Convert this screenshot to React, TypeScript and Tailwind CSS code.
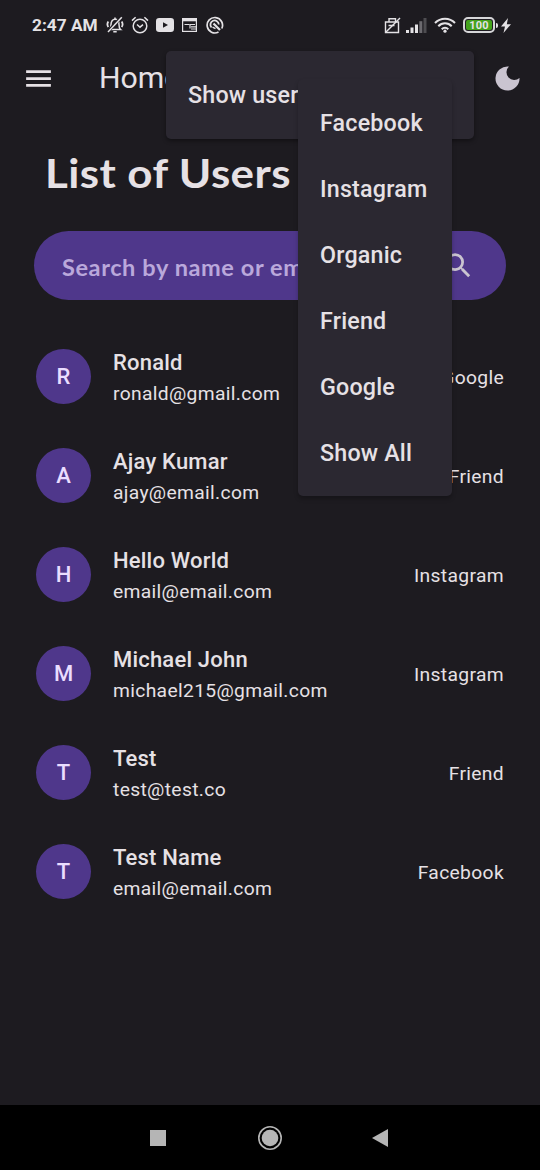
import React from "react";
import { MdMenu, MdSearch } from "react-icons/md";

const users = [
  { name: "Ronald", email: "ronald@gmail.com", source: "Google" },
  { name: "Ajay Kumar", email: "ajay@email.com", source: "Friend" },
  { name: "Hello World", email: "email@email.com", source: "Instagram" },
  { name: "Michael John", email: "michael215@gmail.com", source: "Instagram" },
  { name: "Test", email: "test@test.co", source: "Friend" },
  { name: "Test Name", email: "email@email.com", source: "Facebook" },
];

const sources = ["Facebook", "Instagram", "Organic", "Friend", "Google", "Show All"];

function StatusBar() {
  return (
    <div className="flex h-[50px] items-center pl-[32px] text-[#e4e2e5]">
      <span className="w-[74px] whitespace-nowrap text-[17.3px] font-bold leading-[22px]">2:47 AM</span>
      {/* muted bell */}
      <svg className="h-[18px] w-[18px]" viewBox="0 0 18 18" fill="none" stroke="currentColor" strokeWidth="1.5">
        <path d="M3.500 13.500c1.300-1 1.500-2 1.500-5C5 5.200 6.600 3.300 9 3.300s4 1.900 4 5.200c0 3 .2 4 1.500 5z" />
        <path d="M7.300 15.800h3.400M9 1.500v1.500" />
        <path d="M2.300 5.500c-1 1.500-1 4 0 5.500M15.700 5.500c1 1.500 1 4 0 5.500" strokeWidth="1.800" />
        <path d="M15.500 1L2 15.500" stroke="#1d1b20" strokeWidth="3.200" />
        <path d="M15.800 1.300L2 16" />
      </svg>
      {/* alarm clock */}
      <svg className="ml-[7px] h-[18px] w-[18px]" viewBox="0 0 18 18" fill="none" stroke="currentColor" strokeWidth="1.500">
        <circle cx="9" cy="10" r="6.800" />
        <path d="M1 4.600L4.600 1.300M17 4.600L13.400 1.300M6 8.500l3 2.700 3-2.500" />
      </svg>
      {/* video */}
      <svg className="ml-[7px] h-[14px] w-[18px]" viewBox="0 0 18 14">
        <rect width="18" height="14" rx="3.200" fill="currentColor" />
        <path d="M7 4.300v5.400L12 7z" fill="#1d1b20" />
      </svg>
      {/* news */}
      <svg className="ml-[8px] h-[14px] w-[15px]" viewBox="0 0 15 14" fill="none" stroke="currentColor" strokeWidth="1.200">
        <rect x=".6" y=".6" width="13.800" height="12.800" />
        <path d="M1 2h13" strokeWidth="2.600" />
        <path d="M2.500 6.500h4.500M7.500 6.500h5.500M9 8.800h5M9 11h5" />
        <path d="M8 6v4.500" />
      </svg>
      {/* round app badge */}
      <svg className="ml-[9px] h-[18px] w-[18px]" viewBox="0 0 18 18" fill="none" stroke="currentColor">
        <path d="M12.500 16A7.700 7.700 0 1 1 15.800 12.500" strokeWidth="1.700" />
        <path d="M5.500 11.500A4.200 4.200 0 1 1 12.800 8.500" strokeWidth="1.800" />
        <path d="M7.500 7.500L14 14" strokeWidth="2.200" />
        <path d="M6.500 11.200l3 1.500" strokeWidth="1.500" />
      </svg>

      {/* sim off */}
      <svg className="ml-[160px] h-[17px] w-[17px]" viewBox="0 0 17 17" fill="none" stroke="currentColor" strokeWidth="1.400">
        <path d="M1.500 5h13v10.500h-13zM5 5V1.700h6.500V5M4.500 8.500h6" />
        <path d="M16 1L1.500 15.500" />
      </svg>
      <svg className="ml-[5px] h-[15px] w-[21px]" viewBox="0 0 21 15" fill="currentColor">
        <rect x="0" y="12" width="3" height="3" />
        <rect x="4.500" y="9.500" width="3" height="5.500" />
        <rect x="9" y="6.500" width="3" height="8.500" />
        <rect x="13.300" y="3.200" width="3" height="11.800" opacity=".4" />
        <rect x="17.500" y="0" width="3" height="15" opacity=".25" />
      </svg>
      <svg className="ml-[7px] h-[16px] w-[22px]" viewBox="0 0 22 16" fill="none" stroke="currentColor" strokeWidth="2">
        <path d="M1 6C6.500.2 15.500.2 21 6" />
        <path d="M4.300 9.200c3.700-3.900 9.700-3.900 13.400 0" />
        <path d="M7.700 12.200c1.900-1.800 4.700-1.800 6.600 0" />
        <circle cx="11" cy="14.200" r="1.600" fill="currentColor" stroke="none" />
      </svg>
      <div className="ml-[7px] flex h-[16px] w-[32px] items-center justify-center rounded-[5px] border-2 border-[#d6d6d8] p-[1px]">
        <span className="flex h-full w-full items-center justify-center rounded-[2px] bg-[#43a21b] text-[11px] font-bold leading-none tracking-[0.2px]">
          100
        </span>
      </div>
      <span className="ml-[1px] h-[5px] w-[2px] rounded-r bg-current" />
      <svg className="ml-[3px] h-[15px] w-[10px]" viewBox="0 0 10 15" fill="currentColor">
        <path d="M7 0L0 8.500h4L2.500 15 10 6.200H5.800z" />
      </svg>
    </div>
  );
}

function Header() {
  return (
    <header className="flex h-[56px] items-center pl-[22px] pr-[20px]">
      <MdMenu className="h-[33px] w-[33px] text-[#e6e1e5]" />
      <h1 className="ml-[44px] flex-1 text-[30.25px] leading-[38px] tracking-[-0.1px] text-[#e6e1e5]">Home</h1>
      <svg className="h-[25px] w-[25px] text-[#cac4d0]" viewBox="0 0 26 26" fill="currentColor">
        <path d="M14.500.6A12.500 12.500 0 1 0 25.500 12.400A7.900 7.900 0 0 1 14.500.6z" />
      </svg>
    </header>
  );
}

export default function App() {
  return (
    <div
      className="relative flex h-[1170px] w-[540px] flex-col overflow-hidden bg-[#1d1b20] text-[#e6e1e5]"
      style={{ fontFamily: "Roboto, sans-serif" }}
    >
      <StatusBar />
      <Header />
      <main className="flex flex-1 flex-col">
        <h2
          className="ml-[45px] mt-[42px] origin-left scale-x-[1.07] whitespace-nowrap text-[41px] font-bold leading-[50px] tracking-[0.4px]"
          style={{ fontFamily: "Lato, sans-serif" }}
        >
          List of Users
        </h2>
        <div className="ml-[34px] mt-[33px] flex h-[69px] w-[472px] items-center rounded-full bg-[#4f378b] pl-[28px] pr-[31px]">
          <span
            className="flex-1 origin-left scale-x-[1.07] whitespace-nowrap pt-[5px] text-[22px] font-bold leading-[28px] tracking-[0.55px] text-[#baa8db]"
            style={{ fontFamily: "Lato, sans-serif" }}
          >
            Search by name or email
          </span>
          <MdSearch className="h-[33px] w-[33px] text-[#cac4d0]" />
        </div>
        <ul className="mt-[27px] flex flex-col">
          {users.map((user) => (
            <li key={user.name} className="flex h-[99px] items-center pl-[36px] pr-[36px]">
              <span className="flex h-[55px] w-[55px] items-center justify-center rounded-full bg-[#4f378b] text-[22px] font-medium text-[#eaddff]">
                {user.name[0]}
              </span>
              <div className="ml-[22px] flex flex-1 flex-col gap-[3px] pt-[4px]">
                <span className="text-[22px] font-medium leading-[28px] tracking-[0.2px]">{user.name}</span>
                <span className="text-[19.25px] leading-[28px] tracking-[0.34px]">{user.email}</span>
              </div>
              <span className="pt-[4px] text-[19.25px] tracking-[0.34px]">{user.source}</span>
            </li>
          ))}
        </ul>
      </main>
      <nav className="flex h-[65px] items-center bg-black pl-[150px]">
        <span className="h-[16px] w-[16px] bg-[#b5b5b5]" />
        <svg className="ml-[92px] h-[24px] w-[24px]" viewBox="0 0 24 24" fill="none">
          <circle cx="12" cy="12" r="11.200" stroke="#b5b5b5" strokeWidth="1.600" />
          <circle cx="12" cy="12" r="8.300" fill="#b5b5b5" />
        </svg>
        <svg className="ml-[90px] h-[18px] w-[16px]" viewBox="0 0 16 18" fill="#b5b5b5">
          <path d="M0 9L16 0v18z" />
        </svg>
      </nav>

      <div className="absolute left-[166px] top-[51px] flex h-[88px] w-[308px] items-center rounded-[5px] bg-[#2b2831] px-[22px] pt-[1px] text-[23.25px] font-medium tracking-[0.2px] shadow-[0_2px_4px_rgba(0,0,0,0.4)]">
        Show users
      </div>
      <div className="absolute left-[298px] top-[79px] flex h-[417px] w-[154px] flex-col rounded-[5px] bg-[#2b2831] py-[11px] shadow-[0_3px_4px_rgba(0,0,0,0.25)]">
        {sources.map((source) => (
          <span
            key={source}
            className="flex h-[66px] shrink-0 items-center px-[22px] text-[23.25px] font-medium tracking-[0.2px]"
          >
            {source}
          </span>
        ))}
      </div>
    </div>
  );
}
